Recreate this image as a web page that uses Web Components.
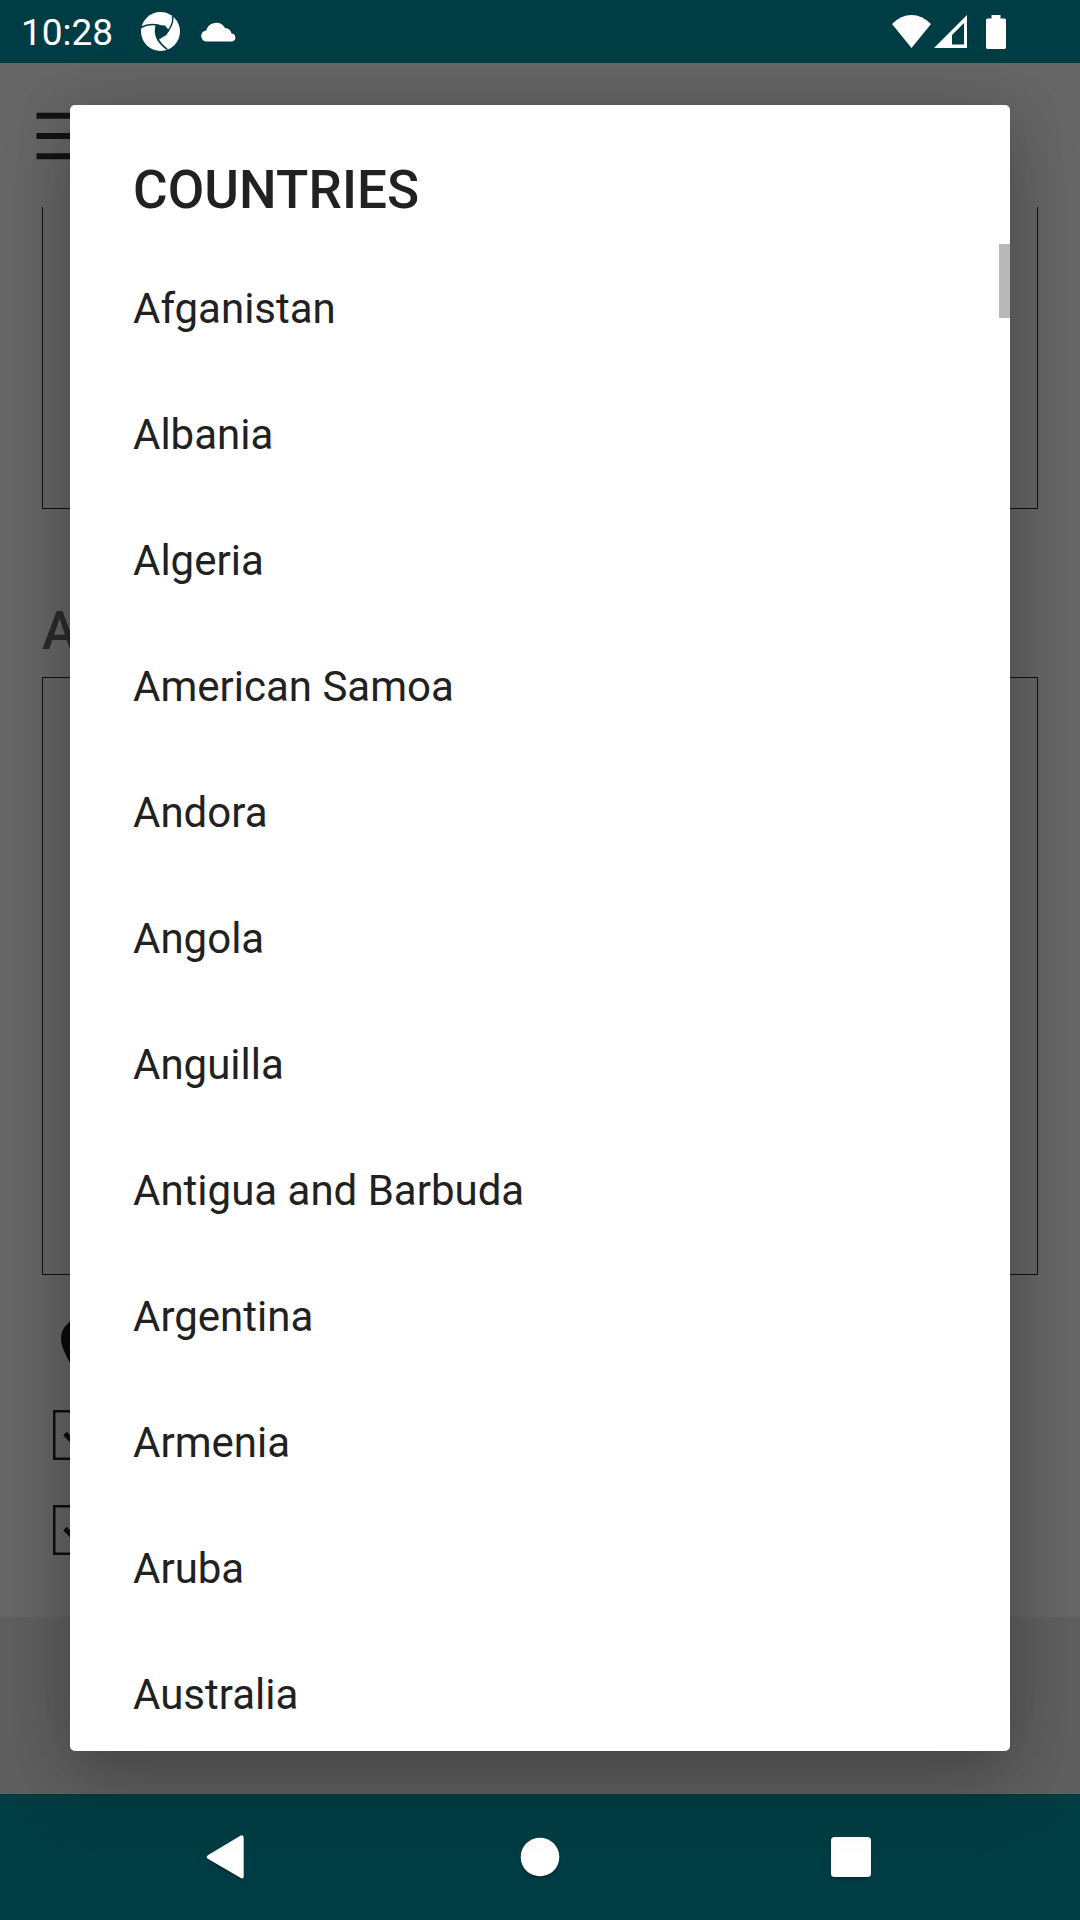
<!DOCTYPE html>
<html lang="en">
<head>
<meta charset="utf-8">
<title>Countries</title>
<style>
html, body { margin: 0; height: 100%; overflow: hidden; }
body { font-family: Roboto, "Noto Sans", sans-serif; }
</style>
</head>
<body>
<phone-screen>
  <status-bar slot="status" time="10:28"></status-bar>
  <form-page slot="page"></form-page>
  <nav-bar slot="nav"></nav-bar>
  <choice-dialog slot="dialog">
    <span slot="title">COUNTRIES</span>
    <choice-item>Afganistan</choice-item>
    <choice-item>Albania</choice-item>
    <choice-item>Algeria</choice-item>
    <choice-item>American Samoa</choice-item>
    <choice-item>Andora</choice-item>
    <choice-item>Angola</choice-item>
    <choice-item>Anguilla</choice-item>
    <choice-item>Antigua and Barbuda</choice-item>
    <choice-item>Argentina</choice-item>
    <choice-item>Armenia</choice-item>
    <choice-item>Aruba</choice-item>
    <choice-item>Australia</choice-item>
  </choice-dialog>
</phone-screen>
<script>
const define = (name, html) => customElements.define(name, class extends HTMLElement {
  constructor() {
    super();
    this.attachShadow({ mode: 'open' }).innerHTML = html;
  }
  connectedCallback() {
    const t = this.shadowRoot.querySelector('[data-time]');
    if (t) t.textContent = this.getAttribute('time');
  }
});

define('choice-item', `
<style>
:host { display: flex; align-items: center; height: 126px; padding: 4px 63px 0; box-sizing: border-box; flex: none;
  font-size: 42px; line-height: 50px; color: #212121; white-space: nowrap; }
</style><slot></slot>`);

define('choice-dialog', `
<style>
:host { display: flex; flex-direction: column; width: 940px; height: 1646px; background: #fff; border-radius: 5px;
  box-shadow: 0 0 60px rgba(0,0,0,.12), 0 30px 72px rgba(0,0,0,.22); }
h1 { margin: 0; height: 139px; padding: 54px 63px 0; box-sizing: border-box; flex: none;
  font-size: 53px; line-height: 62px; letter-spacing: .1px; font-weight: 500; color: #212121; }
.list { position: relative; flex: 1; overflow: hidden; display: flex; flex-direction: column; border-radius: 0 0 5px 5px; }
.thumb { position: absolute; right: 0; top: 0; width: 11px; height: 74px; background: #b8b8b8; }
</style>
<h1><slot name="title"></slot></h1>
<div class="list"><slot></slot><div class="thumb"></div></div>`);

define('check-box', `
<style>
:host { display: block; width: 50px; height: 50px; }
svg { display: block; }
</style>
<svg width="50" height="50" viewBox="0 0 50 50" fill="none" stroke="#262626">
<rect x="1.2" y="1.2" width="47.6" height="47.6" stroke-width="2.6"/>
<path d="M12 23.500l10 10.500 17-19" stroke-width="5"/></svg>`);

define('form-page', `
<style>
:host { display: flex; flex-direction: column; position: relative; height: 100%; background: #fff; overflow: hidden; }
header { height: 144px; padding: 49px 36px 0; box-sizing: border-box; flex: none; }
header svg { display: block; }
.box { margin: 0 42px; border: 1px solid #262626; box-sizing: border-box; flex: none; }
.first { height: 302px; border-top: 0; }
h2 { margin: 0; padding: 91px 42px 0; height: 168px; box-sizing: border-box; flex: none;
  font-size: 53px; line-height: 62px; font-weight: 500; color: #6c6c6c; }
.second { height: 598px; }
.opts { display: flex; flex-direction: column; align-items: flex-start; padding: 36px 53px 0; flex: 1; box-sizing: border-box; }
.pin { display: block; margin: 0 0 27px 7px; }
check-box + check-box { margin-top: 45px; }
footer { height: 177px; background: #ededed; flex: none; }
.scrim { position: absolute; inset: 0; background: rgba(0,0,0,.6); }
</style>
<header><svg width="72" height="48" viewBox="0 0 72 48" fill="#303030">
<path d="M.500.800h71.500v6H.500zM.500 21h71.500v6H.500zM.500 41.300h71.500v6H.500z"/></svg></header>
<div class="box first"></div>
<h2>A</h2>
<div class="box second"></div>
<div class="opts">
<svg class="pin" width="50" height="72" viewBox="0 0 50 72"><path d="M25 4C18 4 14.500 6.500 10 10.500C4.500 15.500 1 20 1 27C1 35 5.500 43.500 10 52L25 72 40 52C44.500 43.500 49 35 49 27C49 20 45.500 15.500 40 10.500C35.500 6.500 32 4 25 4z" fill="#171717"/></svg>
<check-box></check-box><check-box></check-box>
</div>
<footer></footer>
<div class="scrim"></div>`);

define('status-bar', `
<style>
:host { display: flex; align-items: center; height: 63px; box-sizing: border-box; padding: 0 74px 0 21px; background: #003c43; color: #fff; }
.time { font-size: 37px; line-height: 44px; width: 120px; padding-top: 3px; }
.grow { flex: 1; }
svg { display: block; flex: none; fill: #fff; }
</style>
<span class="time" data-time></span>
<svg width="39" height="39" viewBox="0 0 39 39"><circle cx="19.500" cy="19.500" r="19.500"/>
<g fill="#003c43"><path d="M15 13L24 13.500 28 18.500 25.500 23 16.500 28 14.500 21z"/></g>
<g fill="none" stroke="#003c43" stroke-width="1.500"><path d="M0 15.500Q7 11 17 13L28 18.500"/><path d="M31.500 4Q33 11 27 19L16.500 28"/><path d="M15.500 13Q13 20 16.500 27Q20 33 26.500 37.500"/></g></svg>
<svg style="margin-left:20.500px" width="36" height="21" viewBox="0 0 36 21"><path d="M6 20.500A5.500 5.500 0 0 1 5.300 9.500A10.200 10.200 0 0 1 24 7A7 7 0 0 1 30.500 12.500A4.100 4.100 0 0 1 31.500 20.500z"/></svg>
<span class="grow"></span>
<svg width="39" height="33" viewBox="0 0 39 33"><path d="M0 9Q9 0 19.500 0T39 9L19.500 33z"/></svg>
<svg style="margin-left:3px" width="33" height="33" viewBox="0 0 33 33"><path fill-rule="evenodd" d="M33 0V33H0zM30 8L18 20V29.500H30z"/></svg>
<svg style="margin-left:19px" width="20" height="34" viewBox="0 0 20 34"><path d="M5.500 0h9v3.500H18.500Q20 3.500 20 5V32.300Q20 34 18.500 34H1.500Q0 34 0 32.300V5Q0 3.500 1.500 3.500H5.500z"/></svg>`);

define('nav-bar', `
<style>
:host { display: flex; align-items: center; justify-content: space-between; height: 126px; box-sizing: border-box;
  padding: 0 206px; background: #003c43; }
svg { display: block; fill: #fff; overflow: visible; filter: drop-shadow(0 2px 1px rgba(0,0,0,.25)); }
</style>
<svg width="44" height="44" viewBox="0 0 44 44"><path d="M33.500 1.200Q37.700-1.500 37.700 3V41Q37.700 45 34 42.600L1.800 23.800Q-.4 22 1.800 20.200z"/></svg>
<svg width="40" height="40" viewBox="0 0 40 40"><circle cx="20" cy="20" r="19.300"/></svg>
<svg width="44" height="40" viewBox="0 0 44 40"><rect x="1" width="40" height="40" rx="3.500"/></svg>`);

define('phone-screen', `
<style>
:host { position: relative; display: flex; flex-direction: column; width: 1080px; height: 1920px; overflow: hidden; }
.page { flex: 1; min-height: 0; }
.overlay { position: absolute; inset: 0; display: flex; align-items: flex-start; justify-content: center; padding-top: 105px; }
</style>
<slot name="status"></slot>
<div class="page"><slot name="page"></slot></div>
<slot name="nav"></slot>
<div class="overlay"><slot name="dialog"></slot></div>`);
</script>
</body>
</html>
